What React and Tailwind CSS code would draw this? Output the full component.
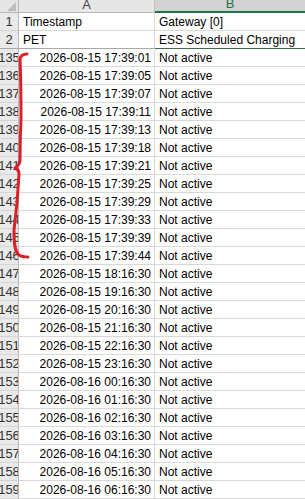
const rows = [
  ["135", "2026-08-15 17:39:01"],
  ["136", "2026-08-15 17:39:05"],
  ["137", "2026-08-15 17:39:07"],
  ["138", "2026-08-15 17:39:11"],
  ["139", "2026-08-15 17:39:13"],
  ["140", "2026-08-15 17:39:18"],
  ["141", "2026-08-15 17:39:21"],
  ["142", "2026-08-15 17:39:25"],
  ["143", "2026-08-15 17:39:29"],
  ["144", "2026-08-15 17:39:33"],
  ["145", "2026-08-15 17:39:39"],
  ["146", "2026-08-15 17:39:44"],
  ["147", "2026-08-15 18:16:30"],
  ["148", "2026-08-15 19:16:30"],
  ["149", "2026-08-15 20:16:30"],
  ["150", "2026-08-15 21:16:30"],
  ["151", "2026-08-15 22:16:30"],
  ["152", "2026-08-15 23:16:30"],
  ["153", "2026-08-16 00:16:30"],
  ["154", "2026-08-16 01:16:30"],
  ["155", "2026-08-16 02:16:30"],
  ["156", "2026-08-16 03:16:30"],
  ["157", "2026-08-16 04:16:30"],
  ["158", "2026-08-16 05:16:30"],
  ["159", "2026-08-16 06:16:30"],
];

const RowHead = ({ n, bottom = "border-[#d4d4d4]" }) => (
  <div
    className={`h-[18px] flex items-center justify-center overflow-hidden bg-[#e9e9e9] border-r border-r-[#b8b8b8] border-b ${bottom} text-[#333] text-[13px]`}
  >
    {n}
  </div>
);

const App = () => {
  return (
    <div
      className="relative w-[305px] h-[499px] overflow-hidden bg-white text-black text-[12px] leading-none"
      style={{ fontFamily: '"Liberation Sans", Arial, sans-serif' }}
    >
      <div className="grid grid-cols-[19px_136px_150px]">
        {/* column headers */}
        <div className="h-[13px] relative bg-[#e6e6e6] border-r border-r-[#b8b8b8] border-b border-b-[#b8b8b8]">
          <div className="absolute right-[2px] bottom-[1px] w-0 h-0 border-l-[9px] border-l-transparent border-b-[9px] border-b-[#bdbdbd]" />
        </div>
        <div className="h-[13px] flex items-end justify-center pb-[1px] bg-[#e6e6e6] border-r border-r-[#c4c4c4] border-b border-b-[#b8b8b8] text-[#444] text-[13px]">
          A
        </div>
        <div className="h-[13px] flex items-end justify-center pb-[1px] bg-[#d2d2d2] border-b-2 border-b-[#217346] text-[#217346] text-[13px]">
          B
        </div>

        {/* row 1 */}
        <RowHead n="1" />
        <div className="h-[18px] flex items-center px-[4px] border-r border-b border-[#d9d9d9]">Timestamp</div>
        <div className="h-[18px] flex items-center px-[4px] border-b border-[#d9d9d9]">Gateway [0]</div>

        {/* row 2 (frozen) */}
        <RowHead n="2" bottom="border-[#a8a8a8]" />
        <div className="h-[18px] flex items-center px-[4px] border-r border-r-[#d9d9d9] border-b border-b-[#a8a8a8]">PET</div>
        <div className="h-[18px] flex items-center px-[4px] border-b border-b-[#3f6b4f]">ESS Scheduled Charging</div>

        {rows.map(([n, ts]) => (
          <div key={n} className="contents">
            <RowHead n={n} />
            <div className="h-[18px] flex items-center justify-end px-[3px] border-r border-b border-[#d9d9d9] whitespace-nowrap">
              {ts}
            </div>
            <div className="h-[18px] flex items-center px-[4px] border-b border-[#d9d9d9]">Not active</div>
          </div>
        ))}
      </div>

      {/* red hand-drawn brace */}
      <svg className="absolute left-0 top-0 pointer-events-none" width="40" height="270" viewBox="0 0 40 270">
        <path
          d="M27,54 C23,54 20,56 20,60 C21,80 21,100 21,120 C20,140 20,150 20,160 C20,164 18,166 15,168 C18,169 19,171 19,174 C18,195 16,215 14,230 C14,245 15,252 19,255 C22,257 25,257 28,257"
          fill="none"
          stroke="#d8212a"
          strokeWidth="3"
          strokeLinecap="round"
          strokeLinejoin="round"
        />
      </svg>
    </div>
  );
};

export default App;
